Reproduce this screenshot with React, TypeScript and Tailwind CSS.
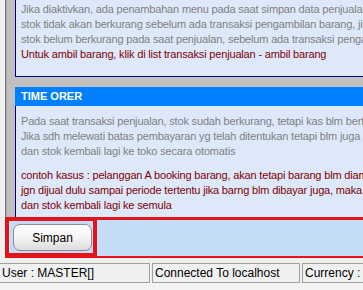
import React from "react";

const body = { fontFamily: '"Liberation Sans", Arial, sans-serif' };

export default function App() {
  return (
    <div
      className="w-[363px] h-[290px] overflow-hidden bg-[#f0f0f0] flex flex-col"
      style={body}
    >
      {/* main area */}
      <div className="flex h-[217px] shrink-0">
        <div className="w-[5px] bg-[#f0f0f0]" />
        <div className="w-[1px] bg-[#7a7a7a]" />
        <div className="w-[1px] bg-[#a8a8a8]" />
        <div className="flex-1 min-w-0 bg-[#c0c0c0] pl-[8px] flex flex-col">
          {/* top panel (scrolled) */}
          <div className="h-[77px] shrink-0 bg-[#dde9fb] border-l border-b border-[#000080] pl-[5px] pt-[2px] overflow-hidden whitespace-nowrap text-[11px] leading-[15px] tracking-[-0.17px]">
            <div className="text-[#808080]">Jika diaktivkan, ada penambahan menu pada saat simpan data penjualan</div>
            <div className="text-[#808080]">stok tidak akan berkurang sebelum ada transaksi pengambilan barang, jika</div>
            <div className="text-[#808080]">stok belum berkurang pada saat penjualan, sebelum ada transaksi pengambilan</div>
            <div className="text-[#800000]">Untuk ambil barang, klik di list transaksi penjualan - ambil barang</div>
          </div>
          {/* second panel */}
          <div className="mt-[10px] h-[19px] shrink-0 bg-[#0080ff] pl-[6px] flex items-center text-white font-bold text-[11px] whitespace-nowrap">
            TIME ORER
          </div>
          <div className="flex-1 bg-[#dde9fb] border-l border-[#000080] pl-[5px] pt-[8px] overflow-hidden whitespace-nowrap text-[11px] leading-[15px] tracking-[-0.17px]">
            <div className="text-[#808080]">Pada saat transaksi penjualan, stok sudah berkurang, tetapi kas blm bertambah</div>
            <div className="text-[#808080]">Jika sdh melewati batas pembayaran yg telah ditentukan tetapi blm juga dibayar</div>
            <div className="text-[#808080]">dan stok kembali lagi ke toko secara otomatis</div>
            <div className="mt-[9px] text-[#800000]">contoh kasus : pelanggan A booking barang, akan tetapi barang blm diambil</div>
            <div className="text-[#800000]">jgn dijual dulu sampai periode tertentu jika barng blm dibayar juga, maka</div>
            <div className="text-[#800000]">dan stok kembali lagi ke semula</div>
          </div>
        </div>
      </div>

      {/* highlighted button bar */}
      <div className="ml-[5px] h-[41px] shrink-0 flex bg-[#c4dcf7] border-t-[3px] border-b-[2px] border-l-[4px] border-[#e3131b]">
        <div className="w-[88px] shrink-0 border-t border-r-[4px] border-b-[3px] border-[#e3131b] pl-[4px] pt-[3px]">
          <button className="w-[79px] h-[27px] rounded-[7px] border border-[#8d8d8d] bg-gradient-to-b from-[#ffffff] via-[#f4f4f4] to-[#dcdcdc] text-[12px] text-black flex items-center justify-center">
            Simpan
          </button>
        </div>
        <div className="flex-1" />
      </div>

      {/* status bar */}
      <div className="mt-[5px] h-[20px] shrink-0 flex gap-[2px] text-[12px] text-black whitespace-nowrap">
        <div className="w-[150px] shrink-0 border border-[#a0a0a0] border-l-0 pl-[2px] flex items-center">User : MASTER[]</div>
        <div className="w-[148px] shrink-0 border border-[#a0a0a0] pl-[2px] flex items-center">Connected To localhost</div>
        <div className="flex-1 min-w-0 border border-[#a0a0a0] border-r-0 pl-[2px] flex items-center overflow-hidden">
          Currency : <span className="ml-[3px] text-[#800000]">Rp</span>
        </div>
      </div>
      <div className="flex-1 bg-[#f4f4f4]" />
    </div>
  );
}
